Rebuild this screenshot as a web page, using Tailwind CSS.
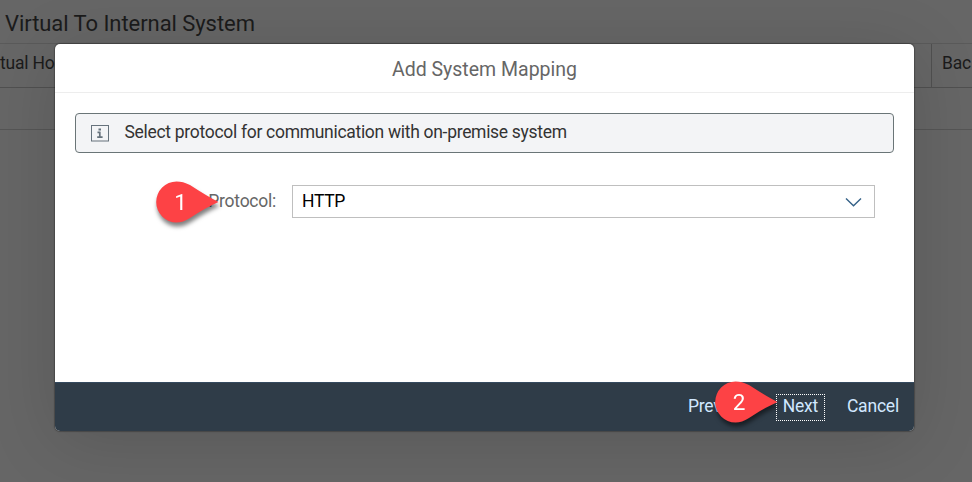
<!DOCTYPE html>
<html lang="en">
<head>
<meta charset="utf-8">
<title>Add System Mapping</title>
<script src="https://cdn.jsdelivr.net/npm/@tailwindcss/browser@4"></script>
</head>
<body class="relative h-[482px] w-[972px] overflow-hidden bg-[#666666] font-[Roboto,sans-serif] whitespace-nowrap">
<main class="flex h-full flex-col text-[#1b1b1b]">
  <h1 class="h-[44px] border-b border-[#5a5a5a] pl-[5px] text-[22px] leading-[48px]"><span class="tracking-[-0.06px]">Virtual To Internal System</span></h1>
  <div class="flex h-[44px] border-b border-[#505050] text-[17.5px] leading-[38px] tracking-[-0.2px]">
    <div class="w-[932px] shrink-0 border-r border-[#505050]">tual Host</div>
    <div class="shrink-0 pl-[10px]">Bac</div>
  </div>
  <div class="h-[42px] border-b border-[#555555]"></div>
</main>

<section role="dialog" class="absolute top-[44px] left-[55px] flex h-[387px] w-[859px] flex-col overflow-hidden rounded-[5px] bg-white shadow-[0_0_1px_1px_rgba(0,0,0,0.25),0_10px_70px_rgba(0,0,0,0.14)]">
  <header class="h-[49px] border-b border-[#ededed] text-center text-[19.5px] leading-[51px] text-[#666]">Add System Mapping</header>
  <div class="flex-1 px-5 pt-5">
    <div class="flex h-[40px] items-center rounded-[4px] border border-[#6a7577] bg-[#f3f4f6] pl-[14px] text-[17.5px] tracking-[-0.3px] text-[#333]">
      <svg class="mr-[15.5px] size-[19px]" viewBox="0 0 19 19" fill="none" stroke="#66727c"><rect x="1.500" y="1.500" width="17" height="15.500"/><path d="M8.500 4.500h2.500v2H8.500z" fill="#66727c" stroke="none"/><path d="M7.500 8.300h3M9.800 8v5M7.200 13.200h5.400" stroke-width="1.700"/></svg>
      <span class="pb-[2px]">Select protocol for communication with on-premise system</span>
    </div>
    <div class="mt-[32px] flex h-[33px] items-center">
      <label class="w-[217px] pr-[16px] text-right text-[17.5px] tracking-[-0.25px] text-[#666]">Protocol:</label>
      <div class="flex h-[33px] w-[583px] items-center justify-between border border-[#bfbfbf] pr-[12px] pl-[9px] text-[17.5px] tracking-[-0.3px] text-black">
        <span>HTTP</span>
        <svg class="h-[10px] w-[17px]" viewBox="0 0 17 10" fill="none" stroke="#346187" stroke-width="1.4"><path d="M1 1.500l7.500 7.300L16 1.500"/></svg>
      </div>
    </div>
  </div>
  <footer class="flex h-[49px] items-center justify-end border-t border-[#354a5f] bg-[#2f3c48] pr-[15px] text-[17.5px] tracking-[-0.2px] text-[#d1e8ff]">
    <span class="mr-[54px] w-[34px] overflow-hidden pb-[2px]">Prev</span>
    <span class="mr-[22px] flex h-[27px] w-[49px] items-center justify-center border border-dotted border-white pb-[2px]">Next</span>
    <span class="pb-[2px]">Cancel</span>
  </footer>
</section>

<svg class="absolute top-[176px] left-[150px] h-[58px] w-[74px] drop-shadow-[1px_4px_2px_rgba(0,0,0,0.5)]" viewBox="0 0 74 58"><path d="M68.500 26Q56 19.500 40 9C35 6.500 31 5.500 26.500 5.500a20.300 20.500 0 0 0 0 41C31 46.500 35 45 40 42Q55 32 68.500 26z" fill="#fd4245"/><text x="30.500" y="34" text-anchor="middle" font-size="22.500" fill="#fff">1</text></svg>
<svg class="absolute top-[376px] left-[709px] h-[58px] w-[74px] drop-shadow-[1px_4px_2px_rgba(0,0,0,0.5)]" viewBox="0 0 74 58"><path d="M68.500 26Q56 19.500 40 9C35 6.500 31 5.500 26.500 5.500a20.300 20.500 0 0 0 0 41C31 46.500 35 45 40 42Q55 32 68.500 26z" fill="#fd4245"/><text x="30" y="34" text-anchor="middle" font-size="22.500" fill="#fff">2</text></svg>
</body>
</html>
